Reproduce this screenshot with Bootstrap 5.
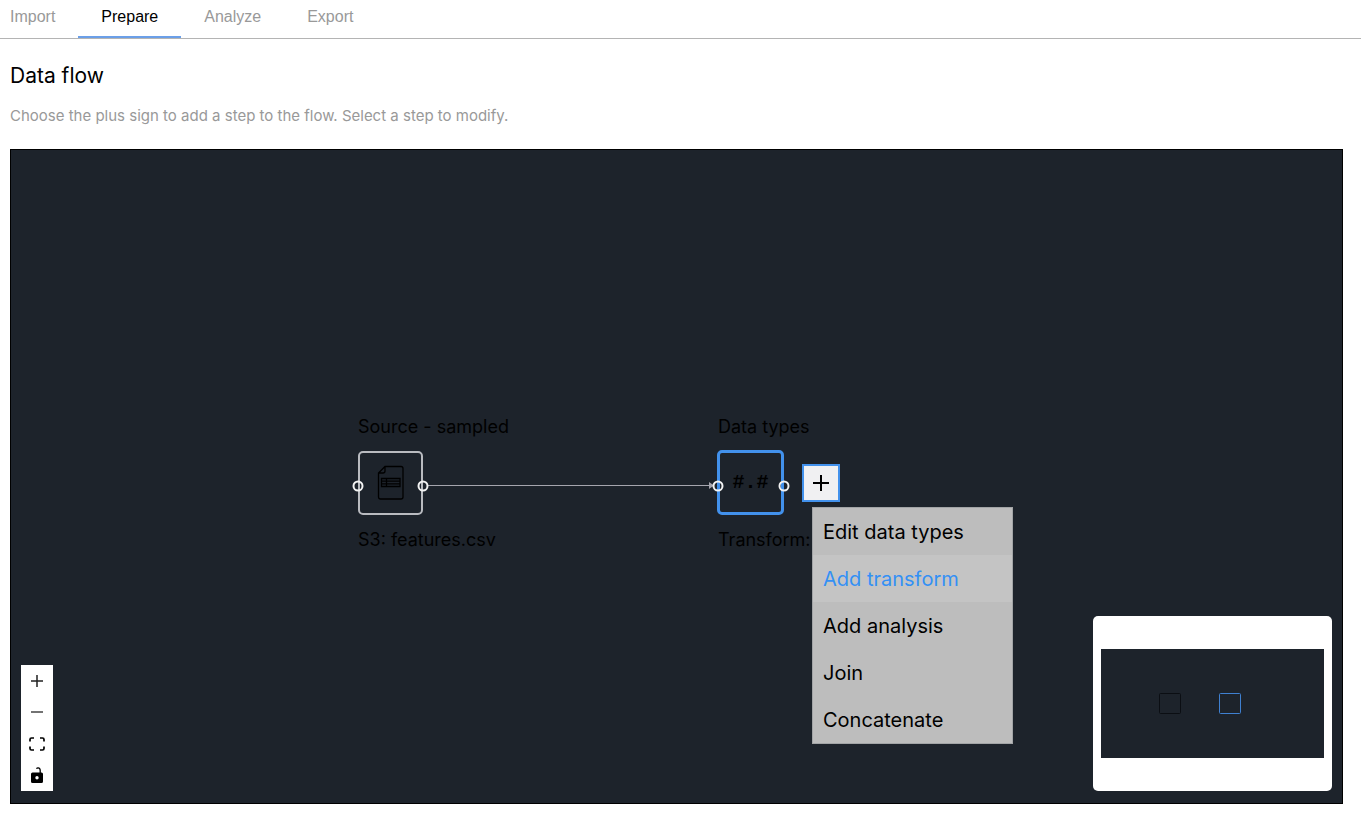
<!DOCTYPE html>
<html lang="en">
<head>
<meta charset="utf-8">
<meta name="viewport" content="width=device-width, initial-scale=1">
<title>Data flow</title>
<link href="https://cdn.jsdelivr.net/npm/bootstrap@5.3.0/dist/css/bootstrap.min.css" rel="stylesheet">
<style>
  body { font-family: Inter, "Liberation Sans", sans-serif; color: #000; background: #fff; }
  .flow-tabs { border-bottom: 1px solid #b4b4b4; font-family: "Liberation Sans", Arial, sans-serif; font-size: 16px; line-height: 20px; }
  .flow-tabs .nav-link { color: #999; padding: 7px 23px 9px; border-bottom: 2px solid transparent; }
  .flow-tabs .nav-item:first-child .nav-link { padding-left: 10px; }
  .flow-tabs .nav-link.active { color: #000; border-bottom-color: #6b9fe8; }
  .flow-main { padding: 24px 18px 18px 10px; }
  .flow-title { font-size: 21px; line-height: 26px; font-weight: 400; margin-bottom: 17px; }
  .flow-hint { font-size: 15px; line-height: 20px; color: #999; margin-bottom: 23px; }
  .flow-canvas { background: #1d232b; border: 1px solid #000; min-height: 600px; }
  .flow-edges { left: 0; top: 0; }

  .flow-node { top: 265px; font-size: 18px; line-height: 24px; white-space: nowrap; }
  .node-source { left: 347px; }
  .node-types { left: 707px; }
  .node-box { width: 65px; height: 64px; margin: 12px 0 13px; padding: 0; background: transparent; border: 2px solid #b9bbc0; border-radius: 5px; color: #000; }
  .node-types .node-box { width: 67px; height: 65px; border: 3px solid #4291ec; margin: 11px 0 13px -1px; font: bold 20px/24px "Liberation Mono", monospace; }
  .node-port { width: 11px; height: 11px; border: 2px solid #f2f2f2; border-radius: 50%; margin-top: 2px; }
  .port-in { left: 0; }
  .port-out { left: 100%; }

  .add-step { left: 791px; top: 314px; width: 38px; height: 38px; background: #f0f0f2; border: 2px solid #4291ec; padding: 0; color: #000; }
  .step-menu { left: 801px; top: 357px; width: 201px; background: #bdbdbd; border: 1px solid #a2a4a6; z-index: 3; }
  .step-menu button { height: 47px; padding: 0 10px; border: 0; background: transparent; color: #000; text-align: left; font-size: 20px; line-height: 24px; }
  .step-menu button.active { background: #c4c4c4; color: #3390f5; }

  .zoom-controls { left: 10px; bottom: 12px; width: 32px; height: 126px; background: #fff; }
  .zoom-controls button { flex: 1 1 0; border: 0; padding: 0; background: transparent; color: #000; }
  .mini-map { right: 10px; bottom: 12px; width: 239px; height: 175px; padding: 0 8px; background: #fff; border-radius: 5px; }
</style>
</head>
<body class="d-flex flex-column min-vh-100">

<nav aria-label="Workflow">
  <ul class="nav flow-tabs">
    <li class="nav-item"><a class="nav-link" href="#import">Import</a></li>
    <li class="nav-item"><a class="nav-link active" aria-current="page" href="#prepare">Prepare</a></li>
    <li class="nav-item"><a class="nav-link" href="#analyze">Analyze</a></li>
    <li class="nav-item"><a class="nav-link" href="#export">Export</a></li>
  </ul>
</nav>

<main class="flow-main d-flex flex-column flex-grow-1">
  <h1 class="flow-title">Data flow</h1>
  <p class="flow-hint">Choose the plus sign to add a step to the flow. Select a step to modify.</p>

  <section class="flow-canvas position-relative flex-grow-1 overflow-hidden" aria-label="Flow canvas">
    <svg class="flow-edges position-absolute w-100 h-100" aria-hidden="true">
      <path d="M416 335.500H700" stroke="#a5a5ae" stroke-width="1.2" fill="none"/>
      <path d="M698 332L703 335.500L698 339Z" fill="#a5a5ae"/>
    </svg>

    <div class="flow-node node-source position-absolute">
      <div class="ps-px">Source - sampled</div>
      <div class="position-relative d-inline-block">
        <button type="button" class="node-box d-flex align-items-center justify-content-center" aria-label="Source node">
          <svg width="28" height="36" viewBox="0 0 28 36" fill="none" stroke="#000" stroke-width="1.300">
            <path d="M8 1.500H24Q26 1.500 26 3.500V32Q26 34 24 34H3.500Q1.500 34 1.500 32V8Z M8 1.500V6Q8 8 6 8H1.500"/>
            <path d="M4.500 13.500H23V21.500H4.500Z M4.500 16.200H23M4.500 18.900H23M9.500 13.500V21.500"/>
          </svg>
        </button>
        <span class="node-port port-in position-absolute top-50 translate-middle"></span>
        <span class="node-port port-out position-absolute top-50 translate-middle"></span>
      </div>
      <div>S3: features.csv</div>
    </div>

    <div class="flow-node node-types position-absolute">
      <div>Data types</div>
      <div class="position-relative d-inline-block">
        <button type="button" class="node-box">#.#</button>
        <span class="node-port port-in position-absolute top-50 translate-middle"></span>
        <span class="node-port port-out position-absolute top-50 translate-middle"></span>
      </div>
      <div>Transform:</div>
    </div>

    <button type="button" class="add-step position-absolute d-flex align-items-center justify-content-center" aria-label="Add step">
      <svg width="18" height="18" viewBox="0 0 18 18" stroke="#000" stroke-width="2"><path d="M9 1V17M1 9H17"/></svg>
    </button>

    <div class="step-menu position-absolute d-flex flex-column">
      <button type="button">Edit data types</button>
      <button type="button" class="active">Add transform</button>
      <button type="button">Add analysis</button>
      <button type="button">Join</button>
      <button type="button">Concatenate</button>
    </div>

    <div class="zoom-controls position-absolute d-flex flex-column">
      <button type="button" class="d-flex align-items-center justify-content-center" aria-label="Zoom in">
        <svg width="14" height="14" viewBox="0 0 14 14" stroke="#222" stroke-width="1.500"><path d="M7 1V13M1 7H13"/></svg>
      </button>
      <button type="button" class="d-flex align-items-center justify-content-center" aria-label="Zoom out">
        <svg width="14" height="14" viewBox="0 0 14 14" stroke="#444" stroke-width="1.500"><path d="M1 7H13"/></svg>
      </button>
      <button type="button" class="d-flex align-items-center justify-content-center" aria-label="Fit view">
        <svg width="16" height="14" viewBox="0 0 16 14" fill="none" stroke="#000" stroke-width="1.700"><path d="M1 4.500V2.500Q1 1 2.500 1H5M11 1H13.500Q15 1 15 2.500V4.500M15 9.500V11.500Q15 13 13.500 13H11M5 13H2.500Q1 13 1 11.500V9.500"/></svg>
      </button>
      <button type="button" class="d-flex align-items-center justify-content-center" aria-label="Toggle lock">
        <svg width="12" height="16" viewBox="0 0 12 16"><path d="M5.500 1.800Q6 .8 7.200.9Q9.200 1.200 9.200 3.500V6" fill="none" stroke="#000" stroke-width="1.300"/><path fill-rule="evenodd" d="M1.500 5.500H10.500Q12 5.500 12 7V14.500Q12 16 10.500 16H1.500Q0 16 0 14.500V7Q0 5.500 1.500 5.500ZM6 9A1.700 1.700 0 1 0 6 12.400A1.700 1.700 0 1 0 6 9Z"/></svg>
      </button>
    </div>

    <div class="mini-map position-absolute d-flex align-items-center">
      <svg class="w-100" height="109" viewBox="0 0 223 109" role="img" aria-label="Mini map">
        <rect width="223" height="109" fill="#1d232b"/>
        <rect x="58.500" y="44.500" width="21" height="20" rx="1" fill="none" stroke="#0b0e13"/>
        <rect x="118.500" y="44.500" width="21" height="20" rx="1" fill="none" stroke="#3f80d0"/>
      </svg>
    </div>
  </section>
</main>

<script src="https://cdn.jsdelivr.net/npm/bootstrap@5.3.0/dist/js/bootstrap.bundle.min.js"></script>
</body>
</html>
